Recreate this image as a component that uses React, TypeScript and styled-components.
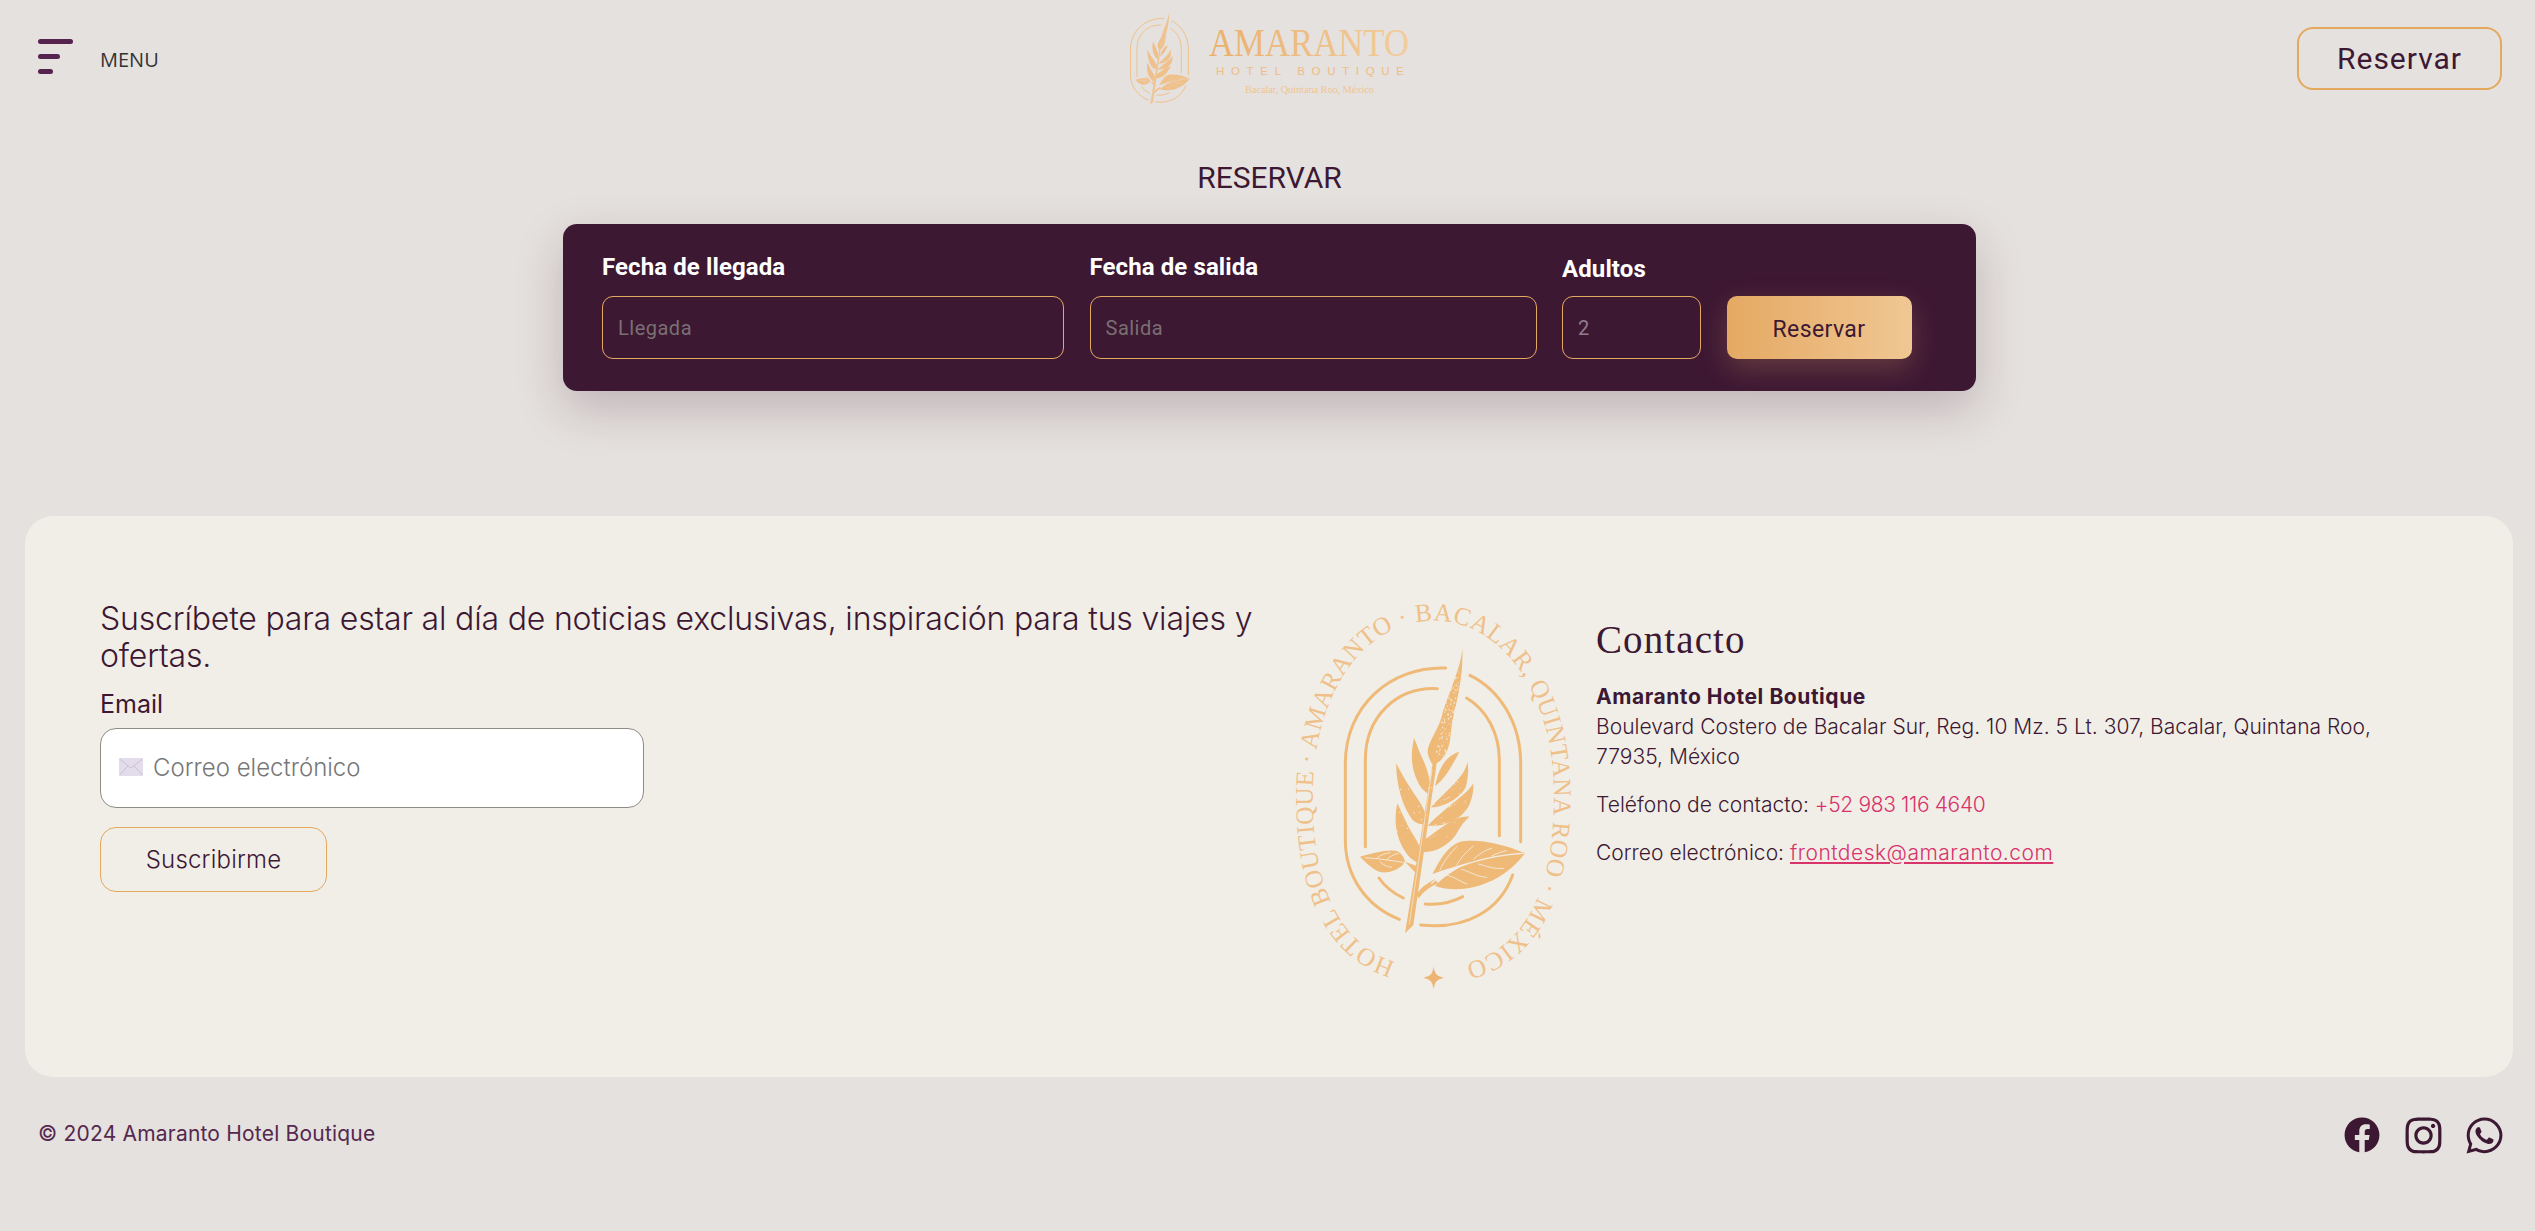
import React from "react";
import styled, { createGlobalStyle } from "styled-components";
import { FaFacebook, FaInstagram, FaWhatsapp } from "react-icons/fa";

const plum = "#3d1833";
const gold = "#e5a85f";
const sans = `"Inter", "Liberation Sans", sans-serif`;
const grotesk = `"Roboto", "Liberation Sans", sans-serif`;
const serif = `"Liberation Serif", serif`;

const Global = createGlobalStyle`
  html, body { margin: 0; padding: 0; background: #e5e1de; }
  * { box-sizing: border-box; }
`;

const Page = styled.div`
  width: 2535px;
  height: 1231px;
  overflow: hidden;
  background: #e5e1de;
  font-family: ${sans};
  color: ${plum};
`;
const Header = styled.header`
  height: 105px;
  padding: 12px 33px 0 38px;
  display: grid;
  grid-template-columns: 1fr 282px 1fr;
  align-items: start;
  column-gap: 0;
`;
const MenuButton = styled.div`
  display: flex;
  align-items: center;
  gap: 27px;
  height: 93px;
`;
const Bars = styled.div`
  display: flex;
  flex-direction: column;
  gap: 10px;
  margin-top: -5px;
`;
const Bar = styled.span<{ $w: number }>`
  display: block;
  width: ${(p) => p.$w}px;
  height: 5px;
  border-radius: 3px;
  background: #56234f;
`;
const MenuLabel = styled.span`
  font: 500 20px/24px "Open Sans", sans-serif;
  color: #333;
  margin-top: 2px;
`;
const HeaderRight = styled.div`
  display: flex;
  justify-content: flex-end;
  padding-top: 15px;
`;
const ReserveLink = styled.a`
  width: 205px;
  height: 63px;
  border: 2px solid ${gold};
  border-radius: 16px;
  display: flex;
  align-items: center;
  justify-content: center;
  font: 400 30px/1 ${grotesk};
  letter-spacing: 1px;
  color: ${plum};
`;
const LogoBox = styled.div`
  margin-left: 1px;
  height: 93px;
`;
const Title = styled.h1`
  margin: 55px 0 28px;
  padding-left: 4px;
  text-align: center;
  font: 400 30px/36px ${grotesk};
  color: ${plum};
`;
const BookingWrap = styled.div`
  display: flex;
  justify-content: center;
  padding-left: 4px;
`;
const BookingCard = styled.form`
  width: 1413px;
  height: 167px;
  padding: 30px 64px 32px 39px;
  background: ${plum};
  border-radius: 14px;
  box-shadow: 0 18px 48px rgba(61, 24, 51, 0.22);
  display: grid;
  grid-template-columns: 462px 447px 139px 185px;
  column-gap: 25.5px;
  align-items: end;
`;
const Field = styled.div<{ $low?: boolean }>`
  display: flex;
  flex-direction: column;
  gap: ${(p) => (p.$low ? 14 : 16)}px;
`;
const FieldLabel = styled.label`
  font: 700 24px/26px ${grotesk};
  letter-spacing: 0.1px;
  color: #fff;
`;
const FieldInput = styled.input`
  width: 100%;
  height: 63px;
  padding: 0 15px;
  background: transparent;
  border: 1px solid ${gold};
  border-radius: 11px;
  font: 400 20px/1 ${grotesk};
  letter-spacing: 0.5px;
  color: #927c8e;
  outline: none;
  &::placeholder { color: #7a6f72; opacity: 1; }
`;
const SubmitButton = styled.button`
  height: 63px;
  border: 0;
  border-radius: 10px;
  padding: 4px 0 0;
  background: linear-gradient(90deg, #e5a963, #f0c793);
  box-shadow: 0 10px 28px rgba(229, 169, 99, 0.24);
  font: 400 23px/1 ${grotesk};
  letter-spacing: 0.4px;
  color: ${plum};
`;
const FooterCard = styled.section`
  margin: 125px 22px 0 25px;
  height: 561px;
  padding: 74px 0 0 75px;
  background: #f1eee7;
  border-radius: 28px;
  display: grid;
  grid-template-columns: 1170px 326px 800px;
  align-items: start;
`;
const Subscribe = styled.div`
  padding-top: 10px;
`;
const SubscribeText = styled.p`
  margin: 0;
  width: 1165px;
  font: 300 32px/37px ${sans};
  letter-spacing: -0.18px;
  color: ${plum};
`;
const EmailLabel = styled.label`
  display: block;
  margin: 16px 0 10px;
  font: 400 25px/28px ${sans};
  color: ${plum};
`;
const EmailBox = styled.div`
  position: relative;
  width: 544px;
`;
const EmailInput = styled.input`
  display: block;
  width: 100%;
  height: 80px;
  padding: 0 0 2px 52px;
  background: #fff;
  border: 1px solid #8f8c85;
  border-radius: 16px;
  font: 300 24px/1 ${sans};
  outline: none;
  &::placeholder { color: #777; opacity: 1; }
`;
const MailIcon = styled.svg`
  position: absolute;
  left: 19px;
  top: 30px;
`;
const SubscribeButton = styled.button`
  display: block;
  margin-top: 19px;
  width: 227px;
  height: 65px;
  background: transparent;
  border: 1px solid ${gold};
  border-radius: 16px;
  font: 300 24px/1 ${sans};
  letter-spacing: 0.2px;
  color: ${plum};
`;
const Emblem = styled.svg`
  display: block;
`;
const Contact = styled.address`
  font-style: normal;
  padding-top: 27px;
  width: 800px;
`;
const ContactTitle = styled.h2`
  margin: 0 0 19px;
  font: 400 39px/46px ${serif};
  letter-spacing: 1.1px;
  color: ${plum};
`;
const ContactText = styled.p`
  margin: 0 0 18px;
  font: 300 21px/30px ${sans};
  color: ${plum};
  letter-spacing: 0.03px;
`;
const ContactName = styled.strong`
  display: block;
  font-weight: 700;
  letter-spacing: 0.55px;
`;
const PinkLink = styled.a<{ $u?: boolean }>`
  color: #d8336b;
  letter-spacing: ${(p) => (p.$u ? 0.5 : -0.35)}px;
  text-decoration: ${(p) => (p.$u ? "underline" : "none")};
`;
const BottomBar = styled.footer`
  margin-top: 40px;
  padding: 0 33px 0 38px;
  display: flex;
  justify-content: space-between;
  align-items: flex-start;
`;
const Copyright = styled.span`
  font: 400 21px/33px ${sans};
  letter-spacing: 0.2px;
  color: #55284f;
`;
const Socials = styled.div`
  display: flex;
  gap: 25px;
  color: ${plum};
`;
const SocialSlot = styled.a<{ $size: number }>`
  width: 36px;
  height: 36px;
  display: flex;
  align-items: center;
  justify-content: center;
  svg {
    flex: none;
    display: block;
    width: ${(p) => p.$size}px;
    height: ${(p) => p.$size}px;
  }
`;

const peach = "#efba78";

const dots = (() => {
  const out: { x: number; y: number; r: number }[] = [];
  let s = 7;
  const rnd = () => {
    s = (s * 16807) % 2147483647;
    return (s % 10000) / 10000;
  };
  for (let i = 0; i < 110; i++) {
    const t = rnd();
    const y = 240 + t * 260;
    const cx = 565 - t * 55 + (rnd() - 0.5) * 34;
    out.push({ x: cx, y, r: 1 + rnd() * 1.6 });
  }
  for (let i = 0; i < 90; i++) {
    const t = rnd();
    out.push({ x: 395 + t * 190 + (rnd() - 0.5) * 50, y: 590 + rnd() * 180 - t * 40, r: 0.9 + rnd() * 1.3 });
  }
  return out;
})();

const Sprig = ({ color = peach, bg = "#f1eee7" }: { color?: string; bg?: string }) => (
  <g>
    <g fill="none" stroke={color} strokeWidth={9} strokeLinecap="round">
      <path d="M527 234C360 228 226 350 226 520L226 750C226 860 290 950 388 988" />
      <path d="M600 256C690 300 752 400 752 520L752 755" />
      <path d="M452 1005C590 1020 690 960 728 855" />
      <path d="M502 296C380 290 286 380 286 510L286 770" />
      <path d="M590 324C650 360 688 430 688 510L688 737" />
      <path d="M327 864C345 890 370 910 400 924" />
      <path d="M466 942C505 945 545 938 578 920" />
    </g>
    <g fill={color}>
      <path d="M577 175C572 240 530 320 515 380C505 420 470 460 473 490C478 510 485 522 490 524C505 520 522 505 532 480C545 450 540 420 552 370C567 310 580 240 577 175Z" />
      <path d="M432 445C422 490 422 530 442 572C452 597 470 610 480 612C486 580 470 530 455 500C445 480 440 460 432 445Z" />
      <path d="M378 520C380 590 398 652 428 690C443 703 460 705 470 700C473 665 445 630 425 600C405 570 392 545 378 520Z" />
      <path d="M382 640C370 690 378 748 408 788C423 808 440 820 452 818C458 790 450 765 430 735C410 705 397 670 382 640Z" />
      <path d="M568 485C535 495 510 520 495 588C522 572 548 525 568 485Z" />
      <path d="M592 515C585 560 540 590 483 652C522 654 572 622 587 592C594 565 597 540 592 515Z" />
      <path d="M610 580C590 615 540 640 473 707C532 712 582 682 599 642C607 622 612 600 610 580Z" />
      <path d="M598 680C560 675 520 710 462 750L458 787C500 788 542 762 562 727C572 707 585 692 598 680Z" />
      <path d="M488 520L405 1030L430 1005L500 520Z" />
      <path d="M270 800C310 790 360 775 385 785C400 795 405 810 405 815C395 835 360 850 335 847C310 842 285 815 270 800Z" />
      <path d="M765 790C700 760 620 745 570 755C530 770 510 810 487 852C530 835 560 830 600 815C560 835 520 860 495 888C560 910 640 893 700 852C730 832 750 810 765 790Z" />
      <path d="M405 815L440 828L438 850Z" />
      <path d="M495 868C470 880 450 895 440 915L446 925C460 905 480 890 505 880Z" />
    </g>
    {dots.map((d, i) => (
      <circle key={i} cx={d.x} cy={d.y} r={d.r} fill={bg} />
    ))}
    <g fill="none" stroke={bg} strokeWidth={2.5} strokeLinecap="round">
      <path d="M760 790C680 795 600 815 545 840C520 852 500 865 485 880" strokeWidth={4} />
      <path d="M510 840C520 815 540 790 560 770M560 825C575 800 590 785 610 768M610 808C625 795 640 782 665 775M665 798C680 790 695 785 710 782" />
      <path d="M530 855C555 860 570 875 590 882M575 838C600 845 620 860 650 862M625 822C650 828 670 838 700 835" />
      <path d="M285 803C320 805 370 812 405 818M320 805C330 795 345 790 360 788M350 810C358 800 370 793 385 790M330 815C340 825 350 830 365 832" />
      <path d="M418 1002L486 540" strokeWidth={2} />
    </g>
  </g>
);

const Logo = () => (
  <svg width="282" height="93" viewBox="0 0 282 93">
    <defs>
      <linearGradient id="lg" x1="0" x2="1" y1="0" y2="0">
        <stop offset="0" stopColor="#e9b06c" />
        <stop offset="1" stopColor="#f2cc9c" />
      </linearGradient>
    </defs>
    <svg x="0" y="0" width="60" height="93" viewBox="222 175 545 858" preserveAspectRatio="none">
      <Sprig color="#f0c08a" bg="#e5e1de" />
    </svg>
    <text x="79" y="44" fontFamily="Liberation Serif, serif" fontSize="40" fill="url(#lg)" textLength="200" lengthAdjust="spacingAndGlyphs">AMARANTO</text>
    <text x="86" y="63" fontFamily="Liberation Sans, sans-serif" fontSize="11.5" fill="#eebd83" textLength="188" lengthAdjust="spacing">HOTEL BOUTIQUE</text>
    <text x="115" y="81" fontFamily="Liberation Serif, serif" fontSize="10.5" fill="#f0c592" textLength="129" lengthAdjust="spacing">Bacalar, Quintana Roo, México</text>
  </svg>
);

const Seal = () => (
  <Emblem width="320" height="410" viewBox="0 0 960 1230">
    <defs>
      <path id="ring" d="M490 1132C250 1132 128 950 128 620C128 300 290 92 490 92C690 92 852 300 852 620C852 950 730 1132 490 1132Z" />
    </defs>
    <text fontFamily="Liberation Serif, serif" fontSize="76" fill="#efc08a">
      <textPath href="#ring" startOffset="50.3%" textAnchor="middle" textLength="2630" lengthAdjust="spacing">
        HOTEL BOUTIQUE · AMARANTO · BACALAR, QUINTANA ROO · MÉXICO
      </textPath>
    </text>
    <Sprig />
    <path d="M491 1130C495 1152 500 1158 522 1163C500 1168 495 1175 491 1197C487 1175 482 1168 460 1163C482 1158 487 1152 491 1130Z" fill="#edb474" />
  </Emblem>
);

export default function App() {
  return (
    <Page>
      <Global />
      <Header>
        <MenuButton>
          <Bars>
            <Bar $w={35} />
            <Bar $w={22} />
            <Bar $w={15} />
          </Bars>
          <MenuLabel>MENU</MenuLabel>
        </MenuButton>
        <LogoBox>
          <Logo />
        </LogoBox>
        <HeaderRight>
          <ReserveLink>Reservar</ReserveLink>
        </HeaderRight>
      </Header>
      <Title>RESERVAR</Title>
      <BookingWrap>
        <BookingCard onSubmit={(e) => e.preventDefault()}>
          <Field>
            <FieldLabel>Fecha de llegada</FieldLabel>
            <FieldInput placeholder="Llegada" readOnly />
          </Field>
          <Field>
            <FieldLabel>Fecha de salida</FieldLabel>
            <FieldInput placeholder="Salida" readOnly />
          </Field>
          <Field $low>
            <FieldLabel>Adultos</FieldLabel>
            <FieldInput defaultValue="2" />
          </Field>
          <SubmitButton type="submit">Reservar</SubmitButton>
        </BookingCard>
      </BookingWrap>
      <FooterCard>
        <Subscribe>
          <SubscribeText>
            Suscríbete para estar al día de noticias exclusivas, inspiración para tus viajes y ofertas.
          </SubscribeText>
          <EmailLabel>Email</EmailLabel>
          <EmailBox>
            <MailIcon width="24" height="18" viewBox="0 0 24 18">
              <rect x="0" y="0" width="24" height="18" rx="1" fill="#e3dcea" />
              <path d="M0.5 1L12 10L23.5 1M0.5 17L9 8M23.5 17L15 8" fill="none" stroke="#cbbfd8" strokeWidth="1" />
            </MailIcon>
            <EmailInput placeholder="Correo electrónico" />
          </EmailBox>
          <SubscribeButton type="button">Suscribirme</SubscribeButton>
        </Subscribe>
        <Seal />
        <Contact>
          <ContactTitle>Contacto</ContactTitle>
          <ContactText>
            <ContactName>Amaranto Hotel Boutique</ContactName>
            Boulevard Costero de Bacalar Sur, Reg. 10 Mz. 5 Lt. 307, Bacalar, Quintana Roo, 77935, México
          </ContactText>
          <ContactText>
            Teléfono de contacto: <PinkLink>+52 983 116 4640</PinkLink>
          </ContactText>
          <ContactText>
            Correo electrónico: <PinkLink $u>frontdesk@amaranto.com</PinkLink>
          </ContactText>
        </Contact>
      </FooterCard>
      <BottomBar>
        <Copyright>© 2024 Amaranto Hotel Boutique</Copyright>
        <Socials>
          <SocialSlot $size={36}><FaFacebook /></SocialSlot>
          <SocialSlot $size={41}><FaInstagram /></SocialSlot>
          <SocialSlot $size={41}><FaWhatsapp /></SocialSlot>
        </Socials>
      </BottomBar>
    </Page>
  );
}
